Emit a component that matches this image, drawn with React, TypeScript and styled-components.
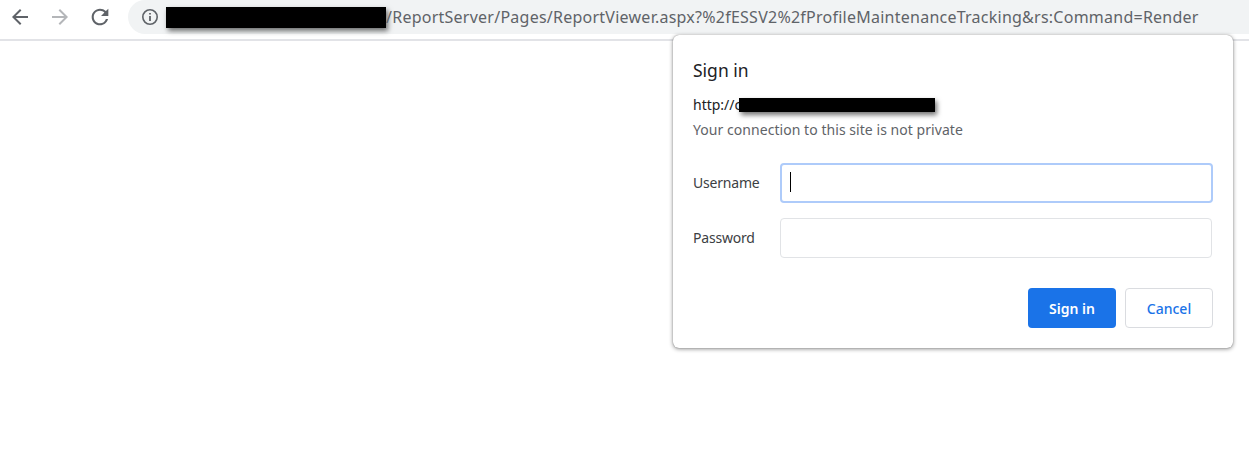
import styled, { createGlobalStyle } from "styled-components";

const GlobalStyle = createGlobalStyle`
  html, body {
    margin: 0;
    background: #fff;
    font-family: "Noto Sans", "Open Sans", sans-serif;
  }
`;

const Page = styled.div`
  position: relative;
  width: 1249px;
  height: 460px;
  overflow: hidden;
  background: #fff;
`;

const Toolbar = styled.div`
  display: flex;
  align-items: flex-start;
  height: 39px;
  border-bottom: 2px solid #e2e3e7;
`;

const NavButtons = styled.div`
  display: flex;
  gap: 16px;
  width: 128px;
  padding: 5px 0 0 8px;
  box-sizing: border-box;
`;

const NavButton = styled.div`
  width: 24px;
  height: 24px;
`;

const Omnibox = styled.div`
  flex: 1;
  display: flex;
  align-items: center;
  height: 34px;
  padding-left: 13px;
  background: #f1f3f4;
  border-radius: 17px 0 0 17px;
`;

const InfoIcon = styled.svg`
  width: 18px;
  height: 18px;
  margin-right: 7px;
`;

const Redaction = styled.div<{ $width: number; $height: number }>`
  flex: none;
  width: ${({ $width }) => $width}px;
  height: ${({ $height }) => $height}px;
  background: #000;
  box-shadow: 2px 3px 5px rgba(0, 0, 0, 0.55);
`;

const UrlText = styled.span`
  font-size: 16px;
  letter-spacing: 0.246px;
  color: #5f6368;
  white-space: nowrap;
`;

const Dialog = styled.div`
  position: absolute;
  left: 673px;
  top: 35px;
  width: 560px;
  height: 313px;
  box-sizing: border-box;
  padding: 24px 20px 0;
  background: #fff;
  border-radius: 6px;
  box-shadow: 0 0 1px rgba(0, 0, 0, 0.45), 0 1px 4px rgba(0, 0, 0, 0.45);
`;

const Title = styled.div`
  font-size: 17.5px;
  line-height: 22px;
  color: #202124;
`;

const Origin = styled.div`
  display: flex;
  align-items: center;
  height: 20px;
  margin-top: 13px;
  font-size: 14px;
  color: #202124;
`;

const OriginRedaction = styled(Redaction)`
  margin: 2px 0 0 -2px;
`;

const Notice = styled.div`
  margin-top: 6px;
  font-size: 14px;
  letter-spacing: 0.05px;
  line-height: 20px;
  color: #5f6368;
`;

const Form = styled.div`
  display: flex;
  flex-direction: column;
  gap: 15px;
  margin-top: 23px;
`;

const Row = styled.label`
  display: flex;
  align-items: center;
  height: 40px;
`;

const RowLabel = styled.span`
  width: 87px;
  padding-bottom: 2px;
  font-size: 14px;
  letter-spacing: -0.2px;
  color: #3c4043;
`;

const Field = styled.div<{ $focused?: boolean }>`
  position: relative;
  box-sizing: border-box;
  width: ${({ $focused }) => ($focused ? 433 : 432)}px;
  height: 40px;
  border-radius: 4px;
  border: ${({ $focused }) => ($focused ? "2px solid #aecbfa" : "1px solid #e1e3e6")};
`;

const Caret = styled.div`
  position: absolute;
  left: 8px;
  top: 7px;
  width: 1px;
  height: 20px;
  background: #000;
`;

const Actions = styled.div`
  display: flex;
  justify-content: flex-end;
  gap: 9px;
  margin-top: 30px;
`;

const Button = styled.button<{ $primary?: boolean }>`
  box-sizing: border-box;
  height: 40px;
  width: 88px;
  border-radius: 4px;
  font-family: inherit;
  font-size: 14px;
  font-weight: ${({ $primary }) => ($primary ? 600 : 500)};
  padding: 0;
  color: ${({ $primary }) => ($primary ? "#fff" : "#1a73e8")};
  background: ${({ $primary }) => ($primary ? "#1a73e8" : "#fff")};
  border: ${({ $primary }) => ($primary ? "none" : "1px solid #dadce0")};
`;

export default function App() {
  return (
    <Page>
      <GlobalStyle />
      <Toolbar>
        <NavButtons>
          <NavButton>
            <svg width="24" height="24" viewBox="0 0 24 24" fill="#5f6368">
              <path d="M20 11H7.83l5.59-5.59L12 4l-8 8 8 8 1.41-1.41L7.83 13H20v-2z" />
            </svg>
          </NavButton>
          <NavButton>
            <svg width="24" height="24" viewBox="0 0 24 24" fill="#b4b6b9">
              <path d="M12 4l-1.41 1.41L16.17 11H4v2h12.17l-5.58 5.59L12 20l8-8z" />
            </svg>
          </NavButton>
          <NavButton>
            <svg width="24" height="24" viewBox="0.5 0.5 23 23" fill="#5f6368">
              <path d="M17.65 6.35A7.958 7.958 0 0 0 12 4c-4.42 0-7.99 3.58-7.99 8s3.57 8 7.99 8c3.73 0 6.84-2.55 7.73-6h-2.08A5.99 5.99 0 0 1 12 18c-3.31 0-6-2.69-6-6s2.69-6 6-6c1.66 0 3.14.69 4.22 1.78L13 11h7V4l-2.35 2.35z" />
            </svg>
          </NavButton>
        </NavButtons>
        <Omnibox>
          <InfoIcon viewBox="0 0 18 18" fill="none">
            <circle cx="9" cy="9" r="7.2" stroke="#5f6368" strokeWidth="1.6" />
            <path d="M9 8v5M9 5v1.6" stroke="#5f6368" strokeWidth="1.8" />
          </InfoIcon>
          <Redaction $width={220} $height={21} />
          <UrlText>/ReportServer/Pages/ReportViewer.aspx?%2fESSV2%2fProfileMaintenanceTracking&amp;rs:Command=Render</UrlText>
        </Omnibox>
      </Toolbar>
      <Dialog>
        <Title>Sign in</Title>
        <Origin>
          <span>http://c</span>
          <OriginRedaction $width={196} $height={14} />
        </Origin>
        <Notice>Your connection to this site is not private</Notice>
        <Form>
          <Row>
            <RowLabel>Username</RowLabel>
            <Field $focused>
              <Caret />
            </Field>
          </Row>
          <Row>
            <RowLabel>Password</RowLabel>
            <Field />
          </Row>
        </Form>
        <Actions>
          <Button $primary>Sign in</Button>
          <Button>Cancel</Button>
        </Actions>
      </Dialog>
    </Page>
  );
}
